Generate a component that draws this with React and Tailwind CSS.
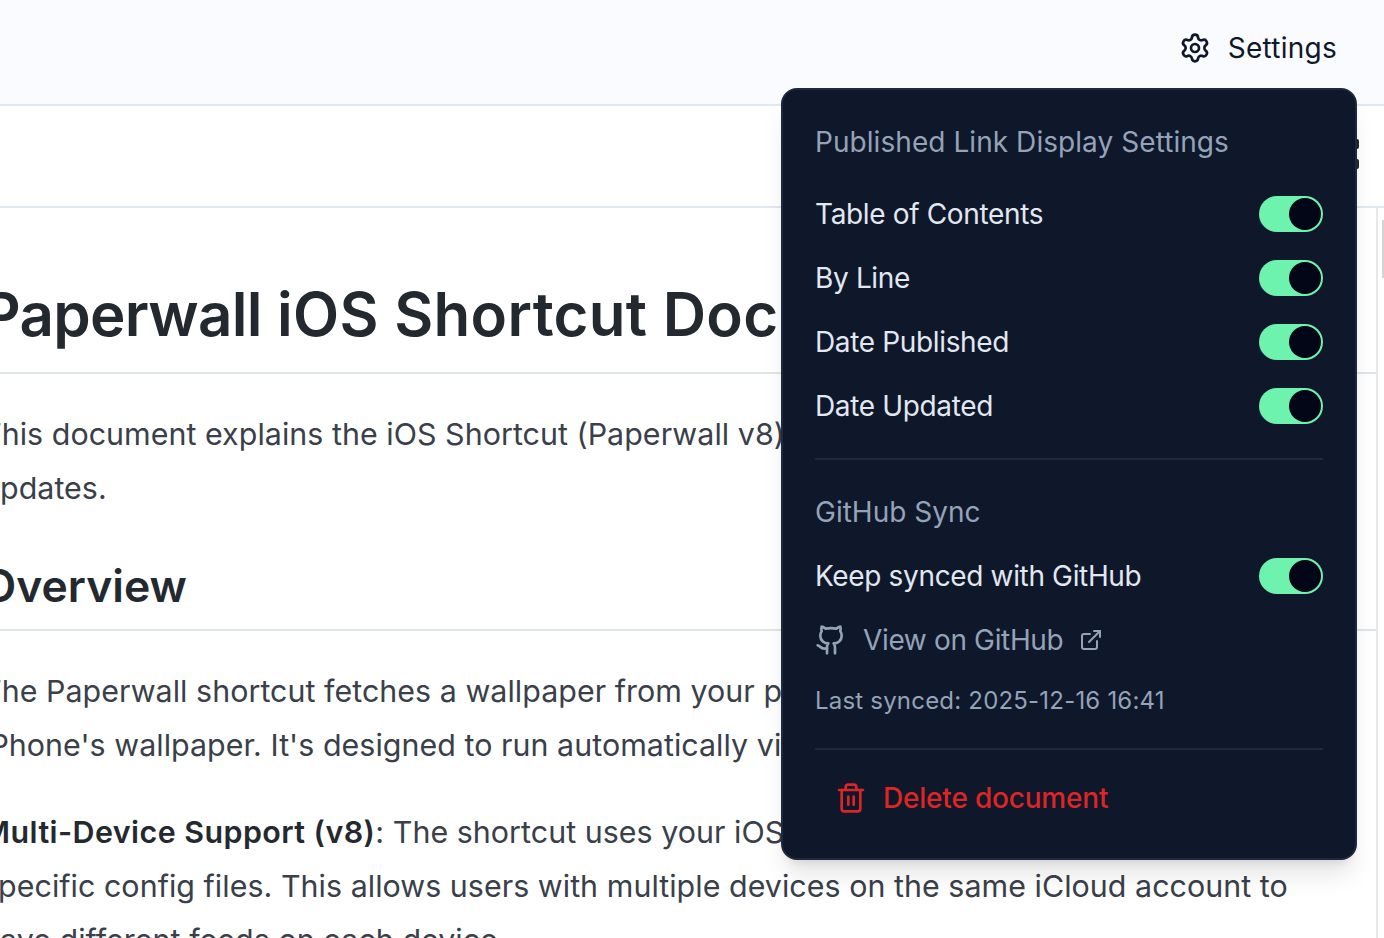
import React from "react";
import { Settings, Github, ExternalLink, Trash2 } from "lucide-react";

const font = { fontFamily: "Inter, sans-serif" };

function Toggle() {
  return (
    <div className="flex h-9 w-16 items-center justify-end rounded-full bg-[#6ef3ae] p-0.5">
      <div className="h-8 w-8 rounded-full bg-[#020617]" />
    </div>
  );
}

function Row({ label }) {
  return (
    <div className="flex h-16 items-center justify-between text-[28px] tracking-[-0.35px] text-[#e2e8f0]">
      <span>{label}</span>
      <Toggle />
    </div>
  );
}

function Menu() {
  return (
    <div className="absolute left-[781px] top-[88px] flex h-[772px] w-[576px] flex-col rounded-2xl border-2 border-[#1e293b] bg-[#0f172a] px-8 pt-5 shadow-xl">
      <div className="flex h-16 items-center text-[28px] tracking-[0.06px] text-[#94a3b8]">Published Link Display Settings</div>
      <div className="mt-2">
        <Row label="Table of Contents" />
        <Row label="By Line" />
        <Row label="Date Published" />
        <Row label="Date Updated" />
      </div>
      <div className="mt-5 h-0.5 bg-[#1e293b]" />
      <div className="mt-5 flex h-16 items-center text-[28px] text-[#94a3b8]">GitHub Sync</div>
      <Row label="Keep synced with GitHub" />
      <div className="flex h-16 items-center text-[28px] tracking-[-0.35px] text-[#94a3b8]">
        <Github size={32} strokeWidth={2} className="mr-4" />
        <span>View on GitHub</span>
        <ExternalLink size={24} strokeWidth={2} className="ml-4" />
      </div>
      <div className="mt-[5px] flex h-12 items-center text-2xl tracking-[0.2px] text-[#94a3b8]">Last synced: 2025-12-16 16:41</div>
      <div className="mt-[23px] h-0.5 bg-[#1e293b]" />
      <div className="mt-4 flex h-16 items-center pl-5 text-[28px] font-medium tracking-[-0.2px] text-[#dc2626]">
        <Trash2 size={32} strokeWidth={2} className="mr-4" />
        <span>Delete document</span>
      </div>
    </div>
  );
}

export default function App() {
  return (
    <div style={font} className="relative h-[938px] w-[1384px] overflow-hidden bg-white">
      <header className="flex h-[106px] items-center justify-end border-b-2 border-[#e2e8f0] bg-[#fafbff] pb-2 pr-[47px] text-[28px] tracking-[0.25px] text-[#0f172a]">
        <Settings size={32} strokeWidth={2} className="mr-[17px]" />
        <span>Settings</span>
      </header>
      <div className="flex h-[102px] items-center justify-end border-b-2 border-[#e2e8f0] pb-1 pr-[25px]">
        <div className="flex flex-col gap-2.5">
          <div className="h-2.5 w-2.5 rounded-[2px] bg-[#24292f]" />
          <div className="h-2.5 w-2.5 rounded-[2px] bg-[#24292f]" />
        </div>
      </div>
      <div className="flex">
        <main className="ml-[-18px] min-w-0 flex-1 overflow-hidden whitespace-nowrap pt-[68px] text-[30.4px] leading-[54px] tracking-[0.04px] text-[#3a404a]">
          <h1 className="border-b-2 border-[#dfe3ea] pb-5 text-[60px] font-semibold leading-[76px] tracking-[0.3px] text-[#24292f]"><span className="tracking-[-0.7px]">Paperwall</span> iOS Shortcut Documentation</h1>
          <p className="mt-[33px]">This document explains the iOS Shortcut (Paperwall v8) and how it works with</p>
          <p>updates.</p>
          <h2 className="mt-[42px] border-b-2 border-[#dfe3ea] pb-[14px] text-[44.5px] font-semibold leading-[58px] tracking-normal text-[#24292f]">Overview</h2>
          <p className="mt-[33px]">The Paperwall shortcut fetches a wallpaper from your published feed and sets it as your</p>
          <p>iPhone's wallpaper. It's designed to run automatically via automation daily</p>
          <p className="mt-[33px]"><strong className="font-semibold tracking-[0.45px] text-[#24292f]">Multi-Device Support (v8)</strong>: The shortcut uses your iOS device name to fetch</p>
          <p>specific config files. This allows users with multiple devices on the same iCloud account to</p>
          <p>have different feeds on each device.</p>
        </main>
        <div className="w-2 shrink-0 border-l-2 border-[#e8e8e8]">
          <div className="ml-1 mt-3 h-[58px] w-1 bg-[#d4d4d4]" />
        </div>
      </div>
      <Menu />
    </div>
  );
}
